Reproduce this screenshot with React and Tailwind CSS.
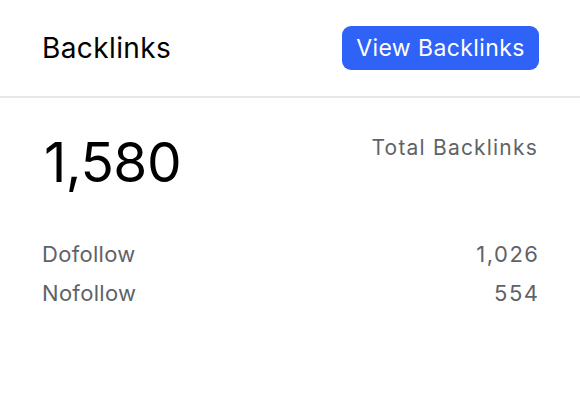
const App = () => {
  return (
    <div
      className="min-h-screen w-full bg-white"
      style={{ fontFamily: "Inter, 'Noto Sans', sans-serif" }}
    >
      <div className="flex h-[98px] items-center justify-between border-b-2 border-[#e6e8eb] pl-[42px] pr-[41px]">
        <h2 className="text-[28px] font-normal tracking-[0.4px] text-black">Backlinks</h2>
        <button className="flex h-[44px] w-[197px] items-center justify-center rounded-[9px] bg-[#2f62f7] text-[23px] tracking-[0.4px] text-white">
          View Backlinks
        </button>
      </div>

      <div className="px-[42px] pt-[37px]">
        <div className="flex items-start justify-between">
          <div className="pl-[2px] text-[55px] leading-[55px] tracking-[-0.5px] text-black">1,580</div>
          <div className="pt-[1px] text-[21px] leading-[24px] tracking-[1.2px] text-[#5f6368]">Total Backlinks</div>
        </div>

        <div className="mt-[52px] flex flex-col gap-[15px] text-[22px] leading-[24px] tracking-[0.3px] text-[#5f6368]">
          <div className="flex items-center justify-between">
            <span>Dofollow</span>
            <span className="tracking-[1.5px] -mr-[1.5px]">1,026</span>
          </div>
          <div className="flex items-center justify-between">
            <span>Nofollow</span>
            <span className="tracking-[1.5px] -mr-[1.5px]">554</span>
          </div>
        </div>
      </div>
    </div>
  );
};

export default App;
